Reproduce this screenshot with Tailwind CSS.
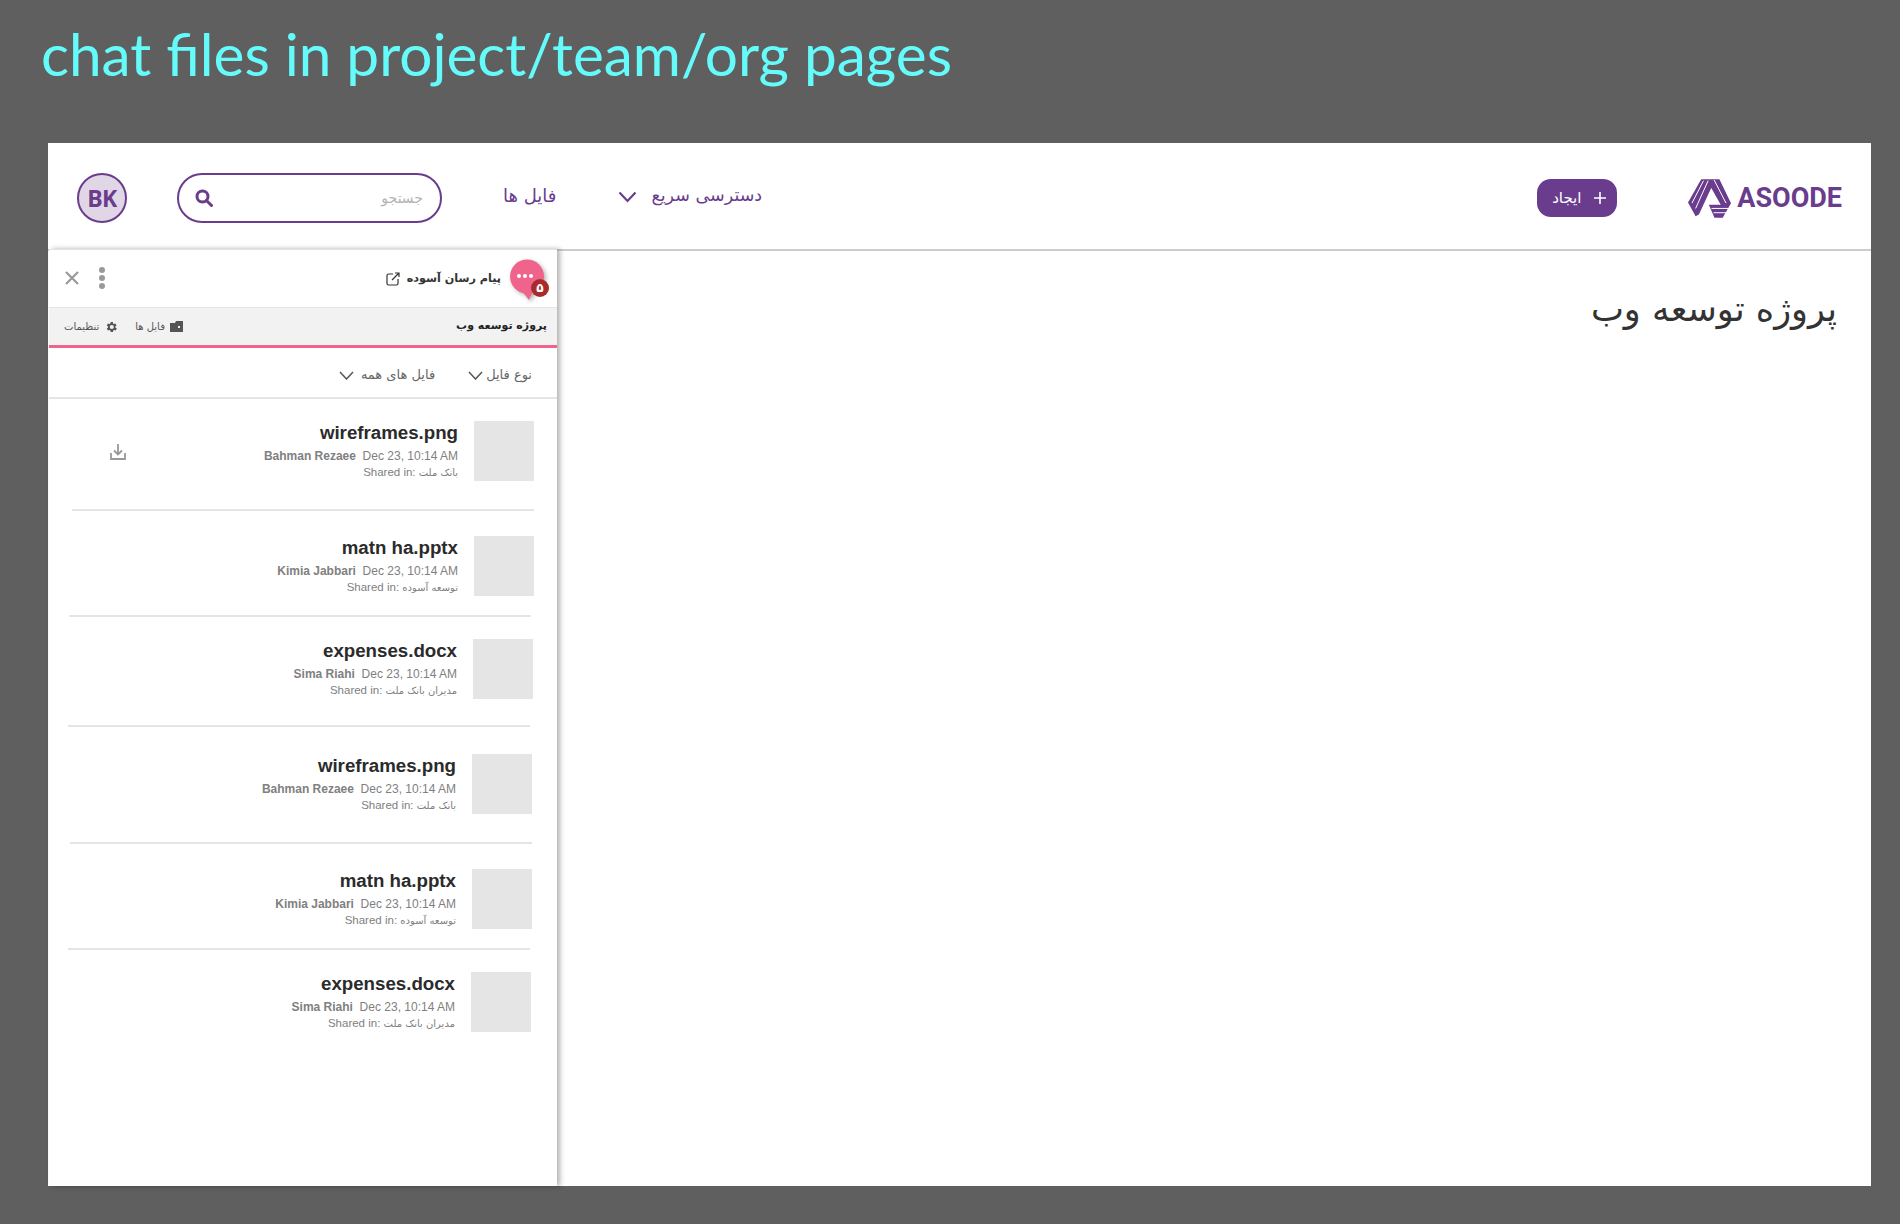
<!DOCTYPE html>
<html lang="fa">
<head>
    <meta charset="UTF-8" />
    <title>chat files in project/team/org pages</title>
    <script src="https://cdn.jsdelivr.net/npm/@tailwindcss/browser@4"></script>
</head>
<body class="h-[1224px] w-[1900px] overflow-hidden bg-[#5f5f5f] font-['DejaVu_Sans',sans-serif]">
    <div class="flex h-[143px] items-start pl-[41px] pt-[13px]">
        <h1 class="font-['Lato',sans-serif] text-[58.500px] leading-[80px] text-[#66fbfb]">chat files in project/team/org pages</h1>
    </div>

    <div class="ml-[48px] flex h-[1043px] w-[1823px] flex-col bg-white">
        <!-- top bar -->
        <header class="flex h-[108px] shrink-0 items-center justify-between border-b-2 border-[#cccccc] pl-[29px] pr-[29px] pt-[4px]">
            <div class="flex items-center">
                <div class="flex h-[50px] w-[50px] items-center justify-center rounded-full border-2 border-[#693c8e] bg-[#e0d6e6] font-['Open_Sans',sans-serif] text-[23px] font-bold tracking-[-0.5px] text-[#693c8e]">BK</div>
                <div class="ml-[50px] flex h-[50px] w-[265px] items-center justify-between rounded-full border-2 border-[#693c8e] pl-[16px] pr-[17px]">
                    <svg class="h-[18px] w-[18px]" viewBox="0 0 18 18" fill="none" stroke="#693c8e" stroke-width="3"><circle cx="7.500" cy="7.500" r="5.500"/><path d="M11.500 11.500 16.500 16.500" stroke-linecap="round"/></svg>
                    <span dir="rtl" class="text-[14px] text-[#b3b3b3]">جستجو</span>
                </div>
                <span dir="rtl" class="mb-[6px] ml-[61px] text-[18px] text-[#693c8e]">فایل ها</span>
                <div class="mb-[6px] ml-[62px] flex items-center gap-[14px]">
                    <svg class="mt-[3px] h-[12px] w-[19px]" viewBox="0 0 19 12" fill="none" stroke="#693c8e" stroke-width="2.200"><path d="M1.500 1.500 9.500 10 17.500 1.500"/></svg>
                    <span dir="rtl" class="text-[17.500px] text-[#693c8e]">دسترسی سریع</span>
                </div>
            </div>
            <div class="flex items-center">
                <button class="flex h-[38px] w-[80px] items-center justify-center gap-[13px] rounded-[14px] bg-[#693c8e] pl-[4px] text-white">
                    <span dir="rtl" class="text-[15px]">ایجاد</span>
                    <svg class="h-[12px] w-[12px]" viewBox="0 0 12 12" stroke="white" stroke-width="1.600"><path d="M6 0V12M0 6H12"/></svg>
                </button>
                <div class="ml-[70px] flex items-center gap-[5px]">
                    <svg class="h-[41px] w-[45px]" viewBox="22 18 136 120" fill="#693c8e">
                        <path d="M65 20H92L100 36L58 126L48 132L25 90Z"/>
                        <path d="M92 20H120L155 92L130 136H105L88 97H124L92 40Z"/>
                        <path d="M72 24 37 92M86 24 48 108M104 22 140 92M96 108H148M102 121H141" fill="none" stroke="white" stroke-width="3"/>
                    </svg>
                    <span class="font-['Roboto',sans-serif] text-[27px] font-bold leading-none text-[#693c8e]">ASOODE</span>
                </div>
            </div>
        </header>

        <div class="flex min-h-0 flex-1">
            <!-- chat panel -->
            <aside class="z-10 ml-[1px] -mt-[2px] flex w-[508px] shrink-0 flex-col border-t border-[#e3e3e3] bg-white shadow-[3px_0_5px_rgba(0,0,0,0.3)]">
                <div class="flex h-[58px] shrink-0 items-center justify-between border-b border-[#e5e5e5] pl-[16px] pr-[12px]">
                    <div class="mb-[2px] flex items-center gap-[20px]">
                        <svg class="h-[14px] w-[14px]" viewBox="0 0 14 14" stroke="#9a9a9a" stroke-width="2.200"><path d="M1 1 13 13M13 1 1 13"/></svg>
                        <svg class="h-[22px] w-[6px]" viewBox="0 0 6 22" fill="#999999"><circle cx="3" cy="3" r="3"/><circle cx="3" cy="11" r="3"/><circle cx="3" cy="19" r="3"/></svg>
                    </div>
                    <div class="flex items-center gap-[7px]">
                        <svg class="h-[14px] w-[14px]" viewBox="0 0 14 14" fill="none" stroke="#333333" stroke-width="1.200"><path d="M7 2H2.500Q1 2 1 3.500V11.500Q1 13 2.500 13H10.500Q12 13 12 11.500V7M6 8 13 1M9 1H13V5"/></svg>
                        <span dir="rtl" class="mt-[1px] text-[11.200px] font-semibold text-[#333333]">پیام رسان آسوده</span>
                        <div class="relative ml-[1px] mt-[3px] h-[42px] w-[36px]">
                            <svg class="h-[42px] w-[36px] drop-shadow-[2px_2px_2px_rgba(0,0,0,0.3)]" viewBox="0 0 36 42" fill="#f0648c"><circle cx="18" cy="17.500" r="17"/><path d="M13 32 20 41 24 32Z"/></svg>
                            <span class="absolute left-[8px] top-[15px] flex gap-[2px]">
                                <i class="h-[4px] w-[4px] rounded-full bg-white"></i><i class="h-[4px] w-[4px] rounded-full bg-white"></i><i class="h-[4px] w-[4px] rounded-full bg-white"></i>
                            </span>
                            <span class="absolute left-[22px] top-[20px] flex h-[18px] w-[18px] items-center justify-center rounded-full bg-[#a92c2c] text-[12px] font-bold text-white">۵</span>
                        </div>
                    </div>
                </div>
                <div class="flex h-[37px] shrink-0 items-center justify-between bg-[#f2f2f2] pl-[15px] pr-[10px]">
                    <div class="flex items-center gap-[17px] text-[10px] text-[#555555]">
                        <div class="flex items-center gap-[5px]">
                            <span dir="rtl">تنظیمات</span>
                            <svg class="h-[14px] w-[14px]" viewBox="0 0 24 24" fill="#555555"><path d="M19.400 13a7.500 7.500 0 0 0 0-2l2.100-1.600-2-3.500-2.500 1a7.500 7.500 0 0 0-1.700-1L15.400 3.300h-4l-.4 2.600a7.500 7.500 0 0 0-1.700 1l-2.500-1-2 3.500L6.900 11a7.500 7.500 0 0 0 0 2l-2.100 1.600 2 3.500 2.500-1a7.500 7.500 0 0 0 1.700 1l.4 2.600h4l.4-2.600a7.500 7.500 0 0 0 1.700-1l2.500 1 2-3.500ZM13.400 15.500a3.500 3.500 0 1 1 0-7 3.500 3.500 0 0 1 0 7Z"/></svg>
                        </div>
                        <div class="flex items-center gap-[5px]">
                            <span dir="rtl">فایل ها</span>
                            <svg class="h-[11px] w-[13px]" viewBox="0 0 13 11" fill="#555555"><path d="M0 2H5L6 0H13V11H0ZM8 5V7H10V5Z"/></svg>
                        </div>
                    </div>
                    <span dir="rtl" class="text-[11px] font-bold text-[#222222]">پروژه توسعه وب</span>
                </div>
                <div class="h-[3px] shrink-0 bg-[#f0648c]"></div>
                <div class="flex h-[51px] shrink-0 items-center justify-end gap-[33px] border-b-2 border-[#e5e5e5] pr-[25px] pt-[5px] text-[13px] text-[#666666]">
                    <div class="flex items-center gap-[7px]">
                        <svg class="h-[9px] w-[15px]" viewBox="0 0 15 9" fill="none" stroke="#555555" stroke-width="1.500"><path d="M1 1 7.500 8 14 1"/></svg>
                        <span dir="rtl">فایل های همه</span>
                    </div>
                    <div class="flex items-center gap-[3px]">
                        <svg class="h-[9px] w-[15px]" viewBox="0 0 15 9" fill="none" stroke="#555555" stroke-width="1.500"><path d="M1 1 7.500 8 14 1"/></svg>
                        <span dir="rtl">نوع فایل</span>
                    </div>
                </div>

                <!-- files -->
                <div class="flex items-start justify-between pt-[22px] pl-[61px] pr-[23px]">
                    <svg class="mt-[23px] h-[16px] w-[16px]" viewBox="0 0 16 16" fill="none" stroke="#999999" stroke-width="1.800"><path d="M8 0V10M4 6.500 8 10.500 12 6.500M1 9V15H15V9"/></svg>
                    <div class="flex gap-[16px]">
                        <div class="flex h-[60px] flex-col items-end text-right font-['Liberation_Sans',sans-serif]">
                            <span class="text-[18.700px] font-bold leading-[24px] text-[#2b2b2b]">wireframes.png</span>
                            <span class="mt-[3px] text-[12px] leading-[17px] text-[#808080]"><b>Bahman Rezaee</b>&nbsp; Dec 23, 10:14 AM</span>
                            <span class="text-[11.500px] leading-[15px] text-[#808080]">Shared in: <span class="font-['DejaVu_Sans',sans-serif] text-[10px]">بانک ملت</span></span>
                        </div>
                        <div class="h-[60px] w-[60px] bg-[#e5e5e5]"></div>
                    </div>
                </div>
                <div class="ml-[23px] mr-[23px] mt-[28px] h-[2px] bg-[#e5e5e5]"></div>

                <div class="flex justify-end gap-[16px] pt-[25px] pr-[23px]">
                    <div class="flex h-[60px] flex-col items-end text-right font-['Liberation_Sans',sans-serif]">
                        <span class="text-[18.700px] font-bold leading-[24px] text-[#2b2b2b]">matn ha.pptx</span>
                        <span class="mt-[3px] text-[12px] leading-[17px] text-[#808080]"><b>Kimia Jabbari</b>&nbsp; Dec 23, 10:14 AM</span>
                        <span class="text-[11.500px] leading-[15px] text-[#808080]">Shared in: <span class="font-['DejaVu_Sans',sans-serif] text-[10px]">توسعه آسوده</span></span>
                    </div>
                    <div class="h-[60px] w-[60px] bg-[#e5e5e5]"></div>
                </div>
                <div class="ml-[20px] mr-[26px] mt-[19px] h-[2px] bg-[#e5e5e5]"></div>

                <div class="flex justify-end gap-[16px] pt-[22px] pr-[24px]">
                    <div class="flex h-[60px] flex-col items-end text-right font-['Liberation_Sans',sans-serif]">
                        <span class="text-[18.700px] font-bold leading-[24px] text-[#2b2b2b]">expenses.docx</span>
                        <span class="mt-[3px] text-[12px] leading-[17px] text-[#808080]"><b>Sima Riahi</b>&nbsp; Dec 23, 10:14 AM</span>
                        <span class="text-[11.500px] leading-[15px] text-[#808080]">Shared in: <span class="font-['DejaVu_Sans',sans-serif] text-[10px]">مدیران بانک ملت</span></span>
                    </div>
                    <div class="h-[60px] w-[60px] bg-[#e5e5e5]"></div>
                </div>
                <div class="ml-[19px] mr-[27px] mt-[26px] h-[2px] bg-[#e5e5e5]"></div>

                <div class="flex justify-end gap-[16px] pt-[27px] pr-[25px]">
                    <div class="flex h-[60px] flex-col items-end text-right font-['Liberation_Sans',sans-serif]">
                        <span class="text-[18.700px] font-bold leading-[24px] text-[#2b2b2b]">wireframes.png</span>
                        <span class="mt-[3px] text-[12px] leading-[17px] text-[#808080]"><b>Bahman Rezaee</b>&nbsp; Dec 23, 10:14 AM</span>
                        <span class="text-[11.500px] leading-[15px] text-[#808080]">Shared in: <span class="font-['DejaVu_Sans',sans-serif] text-[10px]">بانک ملت</span></span>
                    </div>
                    <div class="h-[60px] w-[60px] bg-[#e5e5e5]"></div>
                </div>
                <div class="ml-[21px] mr-[25px] mt-[28px] h-[2px] bg-[#e5e5e5]"></div>

                <div class="flex justify-end gap-[16px] pt-[25px] pr-[25px]">
                    <div class="flex h-[60px] flex-col items-end text-right font-['Liberation_Sans',sans-serif]">
                        <span class="text-[18.700px] font-bold leading-[24px] text-[#2b2b2b]">matn ha.pptx</span>
                        <span class="mt-[3px] text-[12px] leading-[17px] text-[#808080]"><b>Kimia Jabbari</b>&nbsp; Dec 23, 10:14 AM</span>
                        <span class="text-[11.500px] leading-[15px] text-[#808080]">Shared in: <span class="font-['DejaVu_Sans',sans-serif] text-[10px]">توسعه آسوده</span></span>
                    </div>
                    <div class="h-[60px] w-[60px] bg-[#e5e5e5]"></div>
                </div>
                <div class="ml-[19px] mr-[27px] mt-[19px] h-[2px] bg-[#e5e5e5]"></div>

                <div class="flex justify-end gap-[16px] pt-[22px] pr-[26px]">
                    <div class="flex h-[60px] flex-col items-end text-right font-['Liberation_Sans',sans-serif]">
                        <span class="text-[18.700px] font-bold leading-[24px] text-[#2b2b2b]">expenses.docx</span>
                        <span class="mt-[3px] text-[12px] leading-[17px] text-[#808080]"><b>Sima Riahi</b>&nbsp; Dec 23, 10:14 AM</span>
                        <span class="text-[11.500px] leading-[15px] text-[#808080]">Shared in: <span class="font-['DejaVu_Sans',sans-serif] text-[10px]">مدیران بانک ملت</span></span>
                    </div>
                    <div class="h-[60px] w-[60px] bg-[#e5e5e5]"></div>
                </div>
            </aside>

            <main class="flex flex-1 justify-end pt-[33px] pr-[34px]">
                <h2 dir="rtl" class="text-[35px] leading-[50px] text-[#333333]">پروژه توسعه وب</h2>
            </main>
        </div>
    </div>
</body>
</html>
